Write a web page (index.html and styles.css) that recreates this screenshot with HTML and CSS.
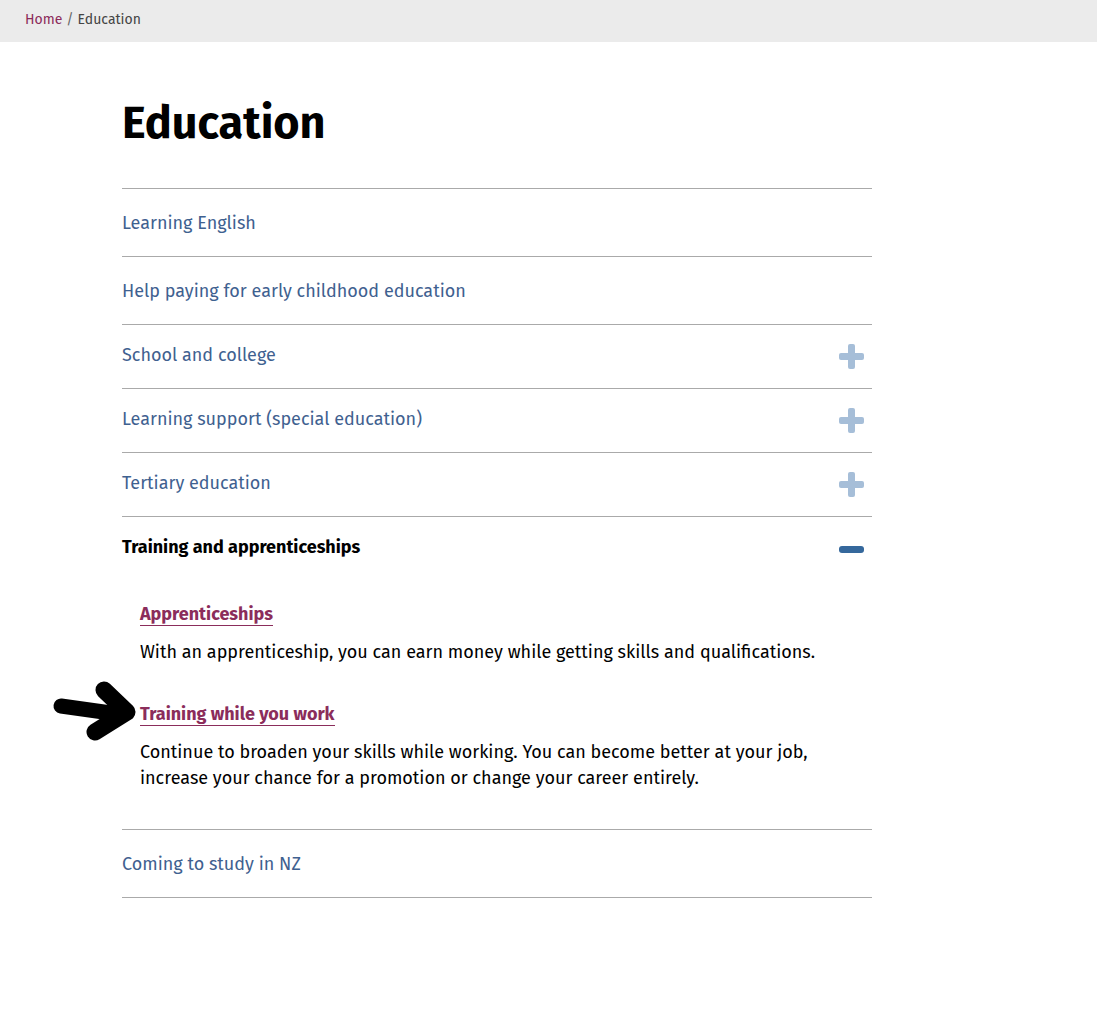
FILE: index.html
```html
<!DOCTYPE html>
<html lang="en">
<head>
<meta charset="utf-8">
<title>Education</title>
<link rel="stylesheet" href="styles.css">
</head>
<body>
<nav class="crumbs"><a href="#" class="crumb-link">Home</a><span class="sep">/</span><span class="crumb-current">Education</span></nav>
<main class="content">
  <h1 class="title">Education</h1>
  <ul class="acc">
    <li class="row row-plain"><a href="#" class="row-link">Learning English</a></li>
    <li class="row row-plain"><a href="#" class="row-link">Help paying for early childhood education</a></li>
    <li class="row"><a href="#" class="row-link">School and college</a><span class="plus"></span></li>
    <li class="row"><a href="#" class="row-link">Learning support (special education)</a><span class="plus"></span></li>
    <li class="row"><a href="#" class="row-link">Tertiary education</a><span class="plus"></span></li>
    <li class="row-open">
      <div class="row row-head"><span class="row-title">Training and apprenticeships</span><span class="minus"></span></div>
      <div class="panel">
        <div class="item">
          <a href="#" class="item-link">Apprenticeships</a>
          <p class="item-desc">With an apprenticeship, you can earn money while getting skills and qualifications.</p>
        </div>
        <div class="item item-marked">
          <svg class="arrow" width="90" height="62" viewBox="0 0 90 62"><path d="M11 26 L68 34" fill="none" stroke="#000" stroke-width="15" stroke-linecap="round"/><path d="M54 10 L77 32 L45 52" fill="none" stroke="#000" stroke-width="17" stroke-linecap="round" stroke-linejoin="round"/></svg>
          <a href="#" class="item-link">Training while you work</a>
          <p class="item-desc">Continue to broaden your skills while working. You can become better at your job, increase your chance for a promotion or change your career entirely.</p>
        </div>
      </div>
    </li>
    <li class="row row-plain"><a href="#" class="row-link">Coming to study in NZ</a></li>
  </ul>
</main>
</body>
</html>
```
FILE: styles.css
```css
* { box-sizing: border-box; }
body {
  margin: 0;
  font-family: "Fira Sans", "Open Sans", "Noto Sans", sans-serif;
  color: #000;
  background: #fff;
}
.crumbs {
  height: 42px;
  background: #ebebeb;
  padding: 0 25px 4px;
  display: flex;
  align-items: center;
  font-size: 14px;
  color: #444;
}
.crumb-link { color: #8b2a5a; text-decoration: none; }
.sep { margin: 0 4px; color: #666; }
.content {
  width: 750px;
  margin-left: 122px;
}
.title {
  margin: 0;
  padding-top: 52px;
  font-size: 45px;
  line-height: 58px;
  font-weight: 700;
}
.acc {
  list-style: none;
  margin: 36px 0 0;
  padding: 0;
  border-top: 1px solid #aaa;
}
.row {
  display: flex;
  align-items: center;
  justify-content: space-between;
  height: 64px;
  border-bottom: 1px solid #aaa;
}
.row-plain { height: 68px; }
.row-link {
  color: #3f6190;
  text-decoration: none;
  font-size: 18px;
  margin-bottom: 4px;
}
.row-plain .row-link { margin-bottom: 0; }
.plus {
  position: relative;
  width: 25px;
  height: 25px;
  margin-right: 8px;
}
.plus::before, .plus::after {
  content: "";
  position: absolute;
  background: #a6bed8;
  border-radius: 2px;
}
.plus::before { left: 0; top: 9px; width: 25px; height: 7px; }
.plus::after { left: 9px; top: 0; width: 7px; height: 25px; }
.row-head { border-bottom: none; }
.row-title { font-size: 18px; font-weight: 700; margin-bottom: 4px; }
.minus {
  width: 25px;
  height: 7px;
  border-radius: 3px;
  background: #35689c;
  margin-right: 8px;
}
.row-open { border-bottom: 1px solid #aaa; }
.panel {
  padding: 22px 0 38px 18px;
}
.item { position: relative; }
.item + .item { margin-top: 38px; }
.item-link {
  display: inline-block;
  color: #8b2d5b;
  font-weight: 700;
  font-size: 18px;
  text-decoration: none;
  border-bottom: 1.5px solid #8b2d5b;
  line-height: 22px;
}
.item-desc {
  margin: 13px 0 0;
  font-size: 18px;
  line-height: 26px;
  max-width: 690px;
}
.arrow {
  position: absolute;
  left: -90px;
  top: -23px;
}
```
